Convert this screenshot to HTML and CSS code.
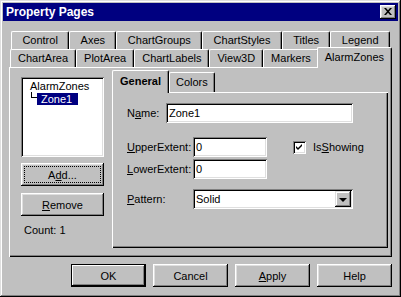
FILE: index.html
```html
<!DOCTYPE html>
<html lang="en">
<head>
    <meta charset="UTF-8">
    <title>Property Pages</title>
    <link rel="stylesheet" href="styles.css">
</head>
<body>
    <div class="window">
        <div class="titlebar">
            <span class="title">Property Pages</span>
            <span class="close">
                <svg width="8" height="7" viewBox="0 0 8 7"><path d="M0 0h2l2 2.3 2-2.3h2l-3 3.5 3 3.5h-2l-2-2.3-2 2.3h-2l3-3.5z" fill="#000"/></svg>
            </span>
        </div>

        <div class="content">
            <div class="tabrow row1">
                <div class="tab">Control</div>
                <div class="tab">Axes</div>
                <div class="tab">ChartGroups</div>
                <div class="tab">ChartStyles</div>
                <div class="tab">Titles</div>
                <div class="tab">Legend</div>
            </div>
            <div class="tabrow row2">
                <div class="tab">ChartArea</div>
                <div class="tab">PlotArea</div>
                <div class="tab">ChartLabels</div>
                <div class="tab">View3D</div>
                <div class="tab">Markers</div>
                <div class="tab active">AlarmZones</div>
            </div>

            <div class="panel">
                <div class="side">
                    <div class="tree">
                        <div class="node">AlarmZones</div>
                        <div class="child">
                            <span class="branch"></span>
                            <span class="selected">Zone1</span>
                        </div>
                    </div>
                    <div class="btn focus">A<u>d</u>d...</div>
                    <div class="btn remove"><u>R</u>emove</div>
                    <div class="count">Count: 1</div>
                </div>

                <div class="subpages">
                    <div class="subtabs">
                        <div class="subtab active">General</div>
                        <div class="subtab">Colors</div>
                    </div>
                    <div class="subpanel">
                        <div class="field">
                            <label class="lbl short">N<u>a</u>me:</label>
                            <input class="edit wide" type="text" value="Zone1">
                        </div>
                        <div class="field upper">
                            <label class="lbl"><u>U</u>pperExtent:</label>
                            <input class="edit small" type="text" value="0">
                            <span class="check">
                                <svg width="7" height="7" viewBox="0 0 7 7"><path d="M6 0v2l-4 4-2-2v-2l2 2z" fill="#000"/></svg>
                            </span>
                            <span class="check-label">Is<u>S</u>howing</span>
                        </div>
                        <div class="field lower">
                            <label class="lbl"><u>L</u>owerExtent:</label>
                            <input class="edit small" type="text" value="0">
                        </div>
                        <div class="field pattern">
                            <label class="lbl"><u>P</u>attern:</label>
                            <div class="combo">
                                <span class="combo-text">Solid</span>
                                <span class="combo-btn"><span class="arrow"></span></span>
                            </div>
                        </div>
                    </div>
                </div>
            </div>

            <div class="actions">
                <div class="btn wide-btn default">OK</div>
                <div class="btn wide-btn">Cancel</div>
                <div class="btn wide-btn"><u>A</u>pply</div>
                <div class="btn wide-btn">Help</div>
            </div>
        </div>
    </div>
</body>
</html>
```

FILE: styles.css
```css
body {
    margin: 0;
    font-family: "Liberation Sans", Arial, sans-serif;
    font-size: 11px;
    color: #000;
}
.window {
    width: 401px;
    height: 297px;
    box-sizing: border-box;
    padding: 3px;
    background: #c0c0c0;
    box-shadow: inset -1px -1px #000, inset 1px 1px #dfdfdf, inset -2px -2px #808080, inset 2px 2px #fff;
}
.titlebar {
    height: 18px;
    background: #000080;
    color: #fff;
    display: flex;
    align-items: center;
    justify-content: space-between;
    padding: 0 2px 0 3px;
}
.title {
    font-weight: bold;
    font-size: 12px;
}
.close {
    width: 16px;
    height: 14px;
    box-sizing: border-box;
    background: #c0c0c0;
    display: flex;
    align-items: center;
    justify-content: center;
    padding: 0 1px 1px 0;
    box-shadow: inset -1px -1px #000, inset 1px 1px #fff, inset -2px -2px #808080, inset 2px 2px #dfdfdf;
}
.content {
    padding: 10px 6px 0 6px;
}
.tabrow {
    display: flex;
    height: 18px;
}
.row1 {
    margin: 0 2px;
}
.row2 {
    margin: 0 2px 0 1px;
}
.tab {
    flex: auto;
    text-align: center;
    line-height: 17px;
    box-sizing: border-box;
    border-top: 1px solid #fff;
    border-left: 1px solid #fff;
    border-right: 1px solid #000;
    border-radius: 2px 2px 0 0;
    box-shadow: inset -1px 0 #808080;
    background: #c0c0c0;
}
.tab.active {
    position: relative;
    z-index: 2;
    height: 21px;
    margin: -2px -2px -1px -2px;
    line-height: 19px;
}
.panel {
    position: relative;
    z-index: 1;
    height: 190px;
    box-sizing: border-box;
    display: flex;
    gap: 8px;
    padding: 3px 4px 9px 12px;
    box-shadow: inset 1px 1px #fff, inset -1px -1px #000, inset -2px -2px #808080;
}
.side {
    width: 83px;
    margin-top: 7px;
    display: flex;
    flex-direction: column;
}
.tree {
    height: 80px;
    box-sizing: border-box;
    background: #fff;
    padding: 3px 0 0 9px;
    line-height: 13px;
    box-shadow: inset 1px 1px #808080, inset -1px -1px #fff, inset 2px 2px #000, inset -2px -2px #dfdfdf;
}
.child {
    display: flex;
    align-items: flex-start;
    line-height: 12px;
}
.branch {
    width: 5px;
    height: 5px;
    margin: -1px 0 0 1px;
    border-left: 1px solid #000;
    border-bottom: 1px solid #000;
}
.selected {
    background: #000080;
    color: #fff;
    padding: 0 6px 0 4px;
}
.btn {
    height: 23px;
    box-sizing: border-box;
    display: flex;
    align-items: center;
    justify-content: center;
    background: #c0c0c0;
    box-shadow: inset -1px -1px #000, inset 1px 1px #fff, inset -2px -2px #808080, inset 2px 2px #dfdfdf;
}
.btn.focus {
    margin-top: 6px;
    outline: 1px dotted #000;
    outline-offset: -4px;
}
.btn.remove {
    margin-top: 7px;
}
.count {
    margin-top: 8px;
    padding-left: 3px;
    line-height: 13px;
}
.subpages {
    flex: 1;
    display: flex;
    flex-direction: column;
}
.subtabs {
    display: flex;
    align-items: flex-end;
    height: 22px;
}
.subtab {
    height: 20px;
    line-height: 19px;
    box-sizing: border-box;
    padding: 0 6px;
    border-top: 1px solid #fff;
    border-left: 1px solid #fff;
    border-right: 1px solid #000;
    border-radius: 2px 2px 0 0;
    box-shadow: inset -1px 0 #808080;
    background: #c0c0c0;
}
.subtab.active {
    position: relative;
    z-index: 2;
    height: 23px;
    margin-bottom: -1px;
    padding: 0 7px;
    font-weight: bold;
    line-height: 20px;
}
.subpanel {
    flex: 1;
    box-sizing: border-box;
    padding: 11px 0 0 15px;
    box-shadow: inset 1px 1px #fff, inset -1px -1px #000, inset -2px -2px #808080;
}
.field {
    display: flex;
    align-items: center;
    height: 20px;
}
.field.upper {
    margin-top: 14px;
}
.field.lower {
    margin-top: 2px;
}
.field.pattern {
    margin-top: 10px;
}
.lbl {
    width: 66px;
}
.lbl.short {
    width: 39px;
}
.edit {
    appearance: none;
    border: none;
    outline: none;
    margin: 0;
    height: 20px;
    box-sizing: border-box;
    padding: 0 3px;
    font: inherit;
    color: #000;
    background: #fff;
    box-shadow: inset 1px 1px #808080, inset -1px -1px #fff, inset 2px 2px #000, inset -2px -2px #dfdfdf;
}
.edit.wide {
    width: 187px;
}
.edit.small {
    width: 74px;
}
.check {
    width: 13px;
    height: 13px;
    box-sizing: border-box;
    margin-left: 26px;
    background: #fff;
    display: flex;
    align-items: center;
    justify-content: center;
    box-shadow: inset 1px 1px #808080, inset -1px -1px #fff, inset 2px 2px #000, inset -2px -2px #dfdfdf;
}
.check-label {
    margin-left: 7px;
}
.combo {
    width: 160px;
    height: 20px;
    box-sizing: border-box;
    background: #fff;
    display: flex;
    align-items: center;
    justify-content: space-between;
    padding: 2px 2px 2px 3px;
    box-shadow: inset 1px 1px #808080, inset -1px -1px #fff, inset 2px 2px #000, inset -2px -2px #dfdfdf;
}
.combo-btn {
    width: 16px;
    height: 16px;
    box-sizing: border-box;
    background: #c0c0c0;
    display: flex;
    align-items: center;
    justify-content: center;
    box-shadow: inset -1px -1px #000, inset 1px 1px #dfdfdf, inset -2px -2px #808080, inset 2px 2px #fff;
}
.arrow {
    width: 0;
    height: 0;
    border-left: 4px solid transparent;
    border-right: 4px solid transparent;
    border-top: 4px solid #000;
    margin: 1px 1px 0 0;
}
.actions {
    display: flex;
    justify-content: flex-end;
    gap: 7px;
    margin-top: 7px;
}
.wide-btn {
    width: 75px;
}
.btn.default {
    box-shadow: inset 0 0 0 1px #000, inset -2px -2px #000, inset 2px 2px #fff, inset -3px -3px #808080;
}
```
